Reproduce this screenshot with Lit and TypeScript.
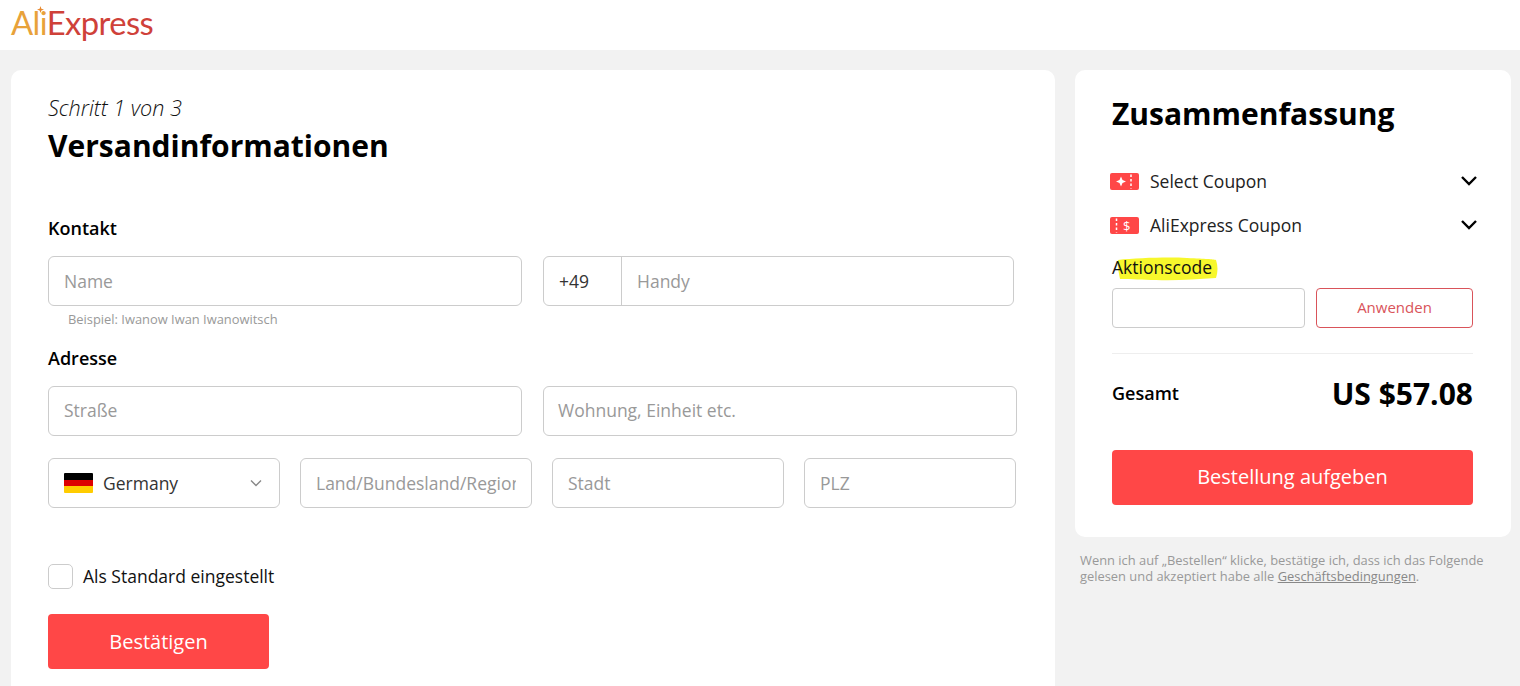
import { LitElement, html, css } from "lit";
import { customElement } from "lit/decorators.js";

@customElement("app-root")
export class AppRoot extends LitElement {
  static styles = css`
    :host { display: block; height: 686px; overflow: hidden; background: #f2f2f2; font-family: "Open Sans", sans-serif; color: #000; }
    * { box-sizing: border-box; }
    header { height: 50px; background: #fff; padding-left: 11px; display: flex; align-items: flex-start; }
    .logo { font-family: "Lato", sans-serif; font-size: 32.8px; line-height: 50px; letter-spacing: -0.6px; font-weight: 400; position: relative; height: 50px; margin-top: -2px; }
    .logo .a { color: #e8a23a; }
    .logo .e { color: #cf4139; }
    .star { position: absolute; left: 26px; top: 8px; width: 7px; height: 7px; color: #e88a30; }
    main { display: flex; align-items: flex-start; padding: 20px 9px 0 11px; gap: 20px; }
    .card { background: #fff; border-radius: 10px; }
    .left { width: 1044px; height: 640px; padding: 26px 0 0 37px; flex: none; }
    .step { font-style: italic; font-weight: 300; font-size: 21.6px; line-height: 24px; color: #111; }
    h1 { margin: 6px 0 0; font-size: 30px; line-height: 40px; font-weight: 700; }
    h2 { margin: 0; font-size: 18px; line-height: 24px; font-weight: 600; }
    h2.k { margin-top: 50px; }
    h2.ad { margin-top: 19px; }
    .row { display: flex; }
    .r1 { margin-top: 16px; }
    .r2 { margin-top: 16px; }
    .r3 { margin-top: 22px; }
    .field { height: 50px; border: 1px solid #ccc; border-radius: 6px; background: #fff; padding: 0 15px; font-size: 17.5px; line-height: 49px; color: #999; white-space: nowrap; flex: none; }
    .r2 .field { line-height: 47px; }
    .clip { display: block; overflow: hidden; }
    .w474 { width: 474px; }
    .mr21 { margin-right: 21px; }
    .w232 { width: 232px; margin-right: 20px; }
    .w212 { width: 212px; }
    .phone { width: 471px; display: flex; padding: 0; }
    .code { width: 78px; border-right: 1px solid #ccc; padding-left: 15px; color: #333; }
    .num { padding-left: 15px; }
    .w474b { width: 474px; padding-left: 14px; }
    .country { display: flex; align-items: center; color: #333; padding: 0 16px 0 15px; }
    .flag { width: 29px; height: 20px; margin-right: 10px; flex: none; border-radius: 1px; background: linear-gradient(#000 0 33.3%, #d00 33.3% 66.6%, #fc0 66.6%); }
    .country .chev { margin-left: auto; width: 14px; height: 14px; color: #888; }
    .hint { margin: 5px 0 0 20px; font-size: 12.9px; line-height: 16px; color: #999; }
    .check { display: flex; align-items: center; margin-top: 56px; height: 25px; font-size: 17.5px; color: #111; }
    .check .txt { margin-top: -2px; }
    .box { width: 25px; height: 25px; border: 1px solid #ccc; border-radius: 5px; margin-right: 10px; }
    .btn { background: #ff4747; color: #fff; border-radius: 4px; display: flex; align-items: center; justify-content: center; font-size: 20px; }
    .confirm { width: 221px; height: 55px; margin-top: 25px; }
    .side { width: 436px; flex: none; }
    .right { height: 467px; padding: 24px 38px 0 37px; }
    .right h1 { margin: 0; }
    .coupon { display: flex; align-items: center; height: 44px; font-size: 17.5px; color: #222; }
    .coupons { margin-top: 25px; }
    .coupon svg.ic { width: 29px; height: 17px; margin-left: -2px; margin-right: 11px; flex: none; }
    .coupon svg.ch { margin-left: auto; margin-right: -5px; width: 18px; height: 12px; flex: none; color: #000; }
    .code-label { position: relative; height: 24px; line-height: 24px; font-size: 17.5px; color: #111; margin-top: 8px; }
    .code-label span { position: relative; }
    .mark { position: absolute; left: 5px; top: 1px; width: 101px; height: 26px; color: #f7f72c; }
    .promo { display: flex; gap: 11px; margin-top: 9px; position: relative; }
    .promo .in { width: 193px; height: 40px; border: 1px solid #ccc; border-radius: 4px; background: #fff; }
    .promo .ap { width: 157px; height: 40px; border: 1px solid #d9545a; border-radius: 4px; color: #d9545a; font-size: 15px; padding-bottom: 2px; display: flex; align-items: center; justify-content: center; }
    hr { margin: 25px 0 0; border: 0; border-top: 1px solid #eee; }
    .total { display: flex; justify-content: space-between; align-items: center; height: 40px; margin-top: 19px; }
    .total b { font-size: 18px; font-weight: 600; }
    .total strong { font-size: 30px; font-weight: 700; }
    .order { height: 55px; margin-top: 37px; padding-bottom: 2px; }
    .legal { margin: 15px 0 0 5px; font-size: 12.9px; line-height: 16px; color: #999; }
    .legal u { color: #888; }
  `;

  render() {
    const chev = html`<svg class="ch" viewBox="0 0 18 12" fill="none" stroke="currentColor" stroke-width="2.4"><path d="M2 2l7 7 7-7"/></svg>`;
    return html`
      <header>
        <div class="logo"><span class="a">Ali</span><span class="e">Express</span>
          <svg class="star" viewBox="0 0 8 8"><path fill="currentColor" d="M4 0l1 3 3 1-3 1-1 3-1-3-3-1 3-1z"/></svg>
        </div>
      </header>
      <main>
        <section class="card left">
          <div class="step">Schritt 1 von 3</div>
          <h1>Versandinformationen</h1>
          <h2 class="k">Kontakt</h2>
          <div class="row r1">
            <div class="field w474 mr21">Name</div>
            <div class="field phone"><div class="code">+49</div><div class="num">Handy</div></div>
          </div>
          <div class="hint">Beispiel: Iwanow Iwan Iwanowitsch</div>
          <h2 class="ad">Adresse</h2>
          <div class="row r2">
            <div class="field w474 mr21">Straße</div>
            <div class="field w474b">Wohnung, Einheit etc.</div>
          </div>
          <div class="row r3">
            <div class="field w232 country"><span class="flag"></span>Germany
              <svg class="chev" viewBox="0 0 14 14" fill="none" stroke="currentColor" stroke-width="1.4"><path d="M2 4.500l5 5 5-5"/></svg>
            </div>
            <div class="field w232"><span class="clip">Land/Bundesland/Region</span></div>
            <div class="field w232">Stadt</div>
            <div class="field w212">PLZ</div>
          </div>
          <div class="check"><span class="box"></span><span class="txt">Als Standard eingestellt</span></div>
          <div class="btn confirm">Bestätigen</div>
        </section>
        <div class="side">
          <section class="card right">
            <h1>Zusammenfassung</h1>
            <div class="coupons">
              <div class="coupon">
                <svg class="ic" viewBox="0 0 29 17"><path fill="#ff4747" d="M2 0h25a2 2 0 0 1 2 2v13a2 2 0 0 1-2 2H2a2 2 0 0 1-2-2V2a2 2 0 0 1 2-2z"/><path fill="#fff" d="M11 3.500l1.500 3.500 3.500 1.500-3.500 1.500L11 13.500 9.500 10 6 8.500 9.500 7z"/><path stroke="#fff" stroke-width="1.500" stroke-dasharray="2.500 2" d="M21 1.500v14"/></svg>
                Select Coupon ${chev}
              </div>
              <div class="coupon">
                <svg class="ic" viewBox="0 0 29 17"><path fill="#ff4747" d="M2 0h25a2 2 0 0 1 2 2v13a2 2 0 0 1-2 2H2a2 2 0 0 1-2-2V2a2 2 0 0 1 2-2z"/><path stroke="#fff" stroke-width="1.500" stroke-dasharray="2.500 2" d="M6.500 1.500v14"/><text x="13" y="13.500" font-family="Open Sans" font-size="13" fill="#fff">$</text></svg>
                AliExpress Coupon ${chev}
              </div>
            </div>
            <div class="code-label">
              <svg class="mark" viewBox="0 0 101 26"><path fill="currentColor" d="M1 4C20 2 50 1 70 2s25 1 29 2c2 6 2 12 0 18-20 1-40 3-60 2-14 0-24-1-36-1C2 17 0 10 1 4z"/></svg>
              <span>Aktionscode</span>
            </div>
            <div class="promo"><div class="in"></div><div class="ap">Anwenden</div></div>
            <hr />
            <div class="total"><b>Gesamt</b><strong>US $57.08</strong></div>
            <div class="btn order">Bestellung aufgeben</div>
          </section>
          <p class="legal">Wenn ich auf „Bestellen“ klicke, bestätige ich, dass ich das Folgende<br />gelesen und akzeptiert habe alle <u>Geschäftsbedingungen</u>.</p>
        </div>
      </main>
    `;
  }
}
